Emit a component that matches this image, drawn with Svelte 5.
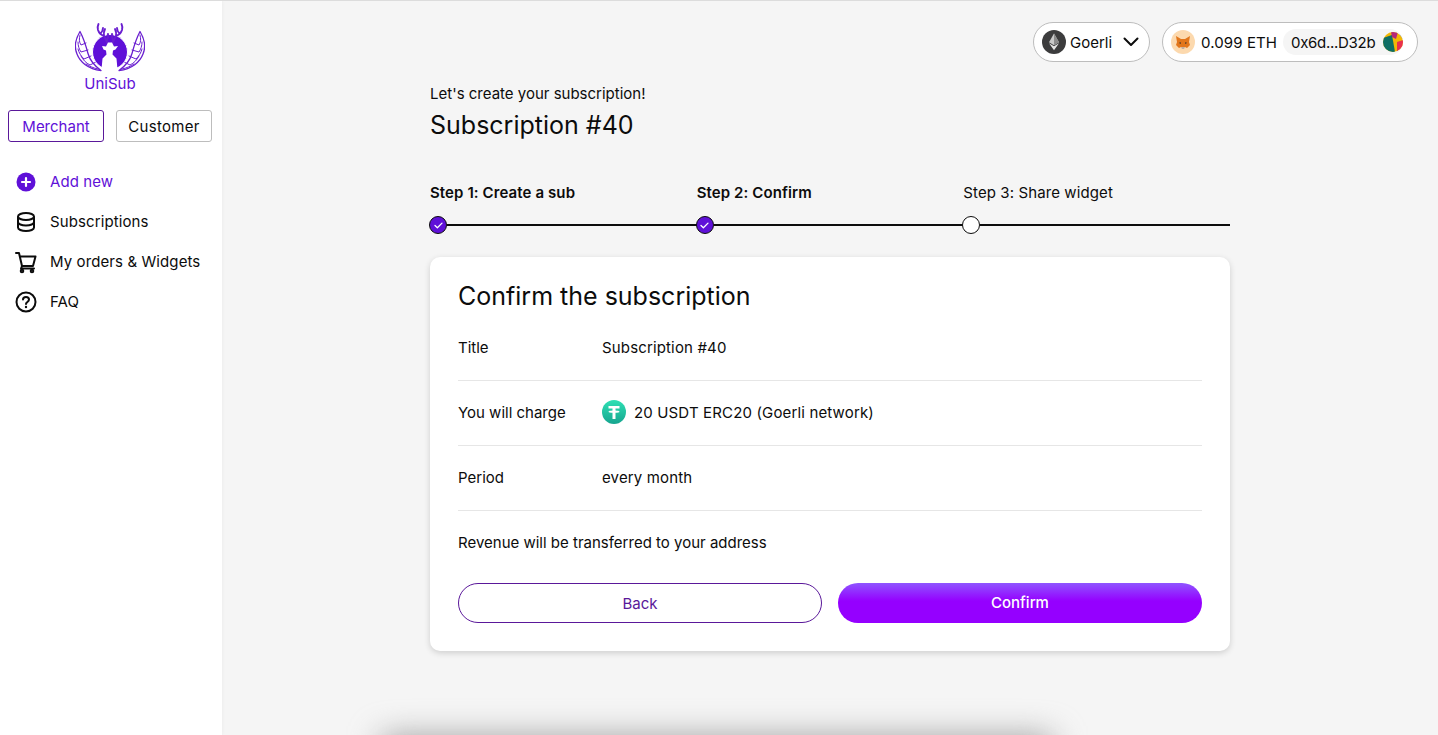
<script>
  const nav = [
    { label: 'Add new', icon: 'add', active: true },
    { label: 'Subscriptions', icon: 'db' },
    { label: 'My orders & Widgets', icon: 'cart' },
    { label: 'FAQ', icon: 'help' }
  ];
  const steps = [
    { label: 'Step 1: Create a sub', done: true },
    { label: 'Step 2: Confirm', done: true },
    { label: 'Step 3: Share widget', done: false }
  ];
  const wings = ['', 'matrix(-1 0 0 1 70 0)'];
</script>

<div class="page">
  <aside class="sidebar">
    <div class="brand">
      <svg class="logo" viewBox="0 0 70 50" width="70" height="50" aria-hidden="true">
        {#each wings as t}
          <g transform={t}>
            <g fill="none" stroke="#6a1fd0" stroke-linecap="round" stroke-linejoin="round">
              <path d="M5 9.500C.5 17-1 25 2 32c3 8 11 15 24 16.500-7-5-11-10-13-17C11 24 9 17 5 9.500z" fill="#fff" stroke-width="1.300" />
              <path d="M5 13c-1 4-1 7 1 10l5-2M3 20c0 4 1 7 3 10l7-2M3 27c1 4 3 7 6 10l7-3M6 34c2 4 5 7 9 9l6-3M11 42c3 2 7 4 12 5" stroke-width="1" />
            </g>
          </g>
        {/each}
        <circle cx="35" cy="30" r="17.500" fill="#5f10d8" stroke="#fff" stroke-width="1" />
        {#each wings as t}
          <g transform={t}>
            <path d="M32.500 21l-3.500-7c-3-1-5-3-6-6-.5-2-.5-4 .5-6M29 14c-.5-3 0-5 1-7M25.500 11.500c1-1 2.500-3 2.500-5.500M32 18c1-2 1.500-3.500 1-6" fill="none" stroke="#6a1fd0" stroke-width="1.900" stroke-linecap="round" stroke-linejoin="round" />
          </g>
        {/each}
        <path d="M27 24l4 .5 2-4h4l2 4 4-.5-2.500 3.500-2.500 1-.5 4 1 1 3 3 1 11c-5 1-11 1-16 0l1-11 3-3 1-1-.5-4-2.500-1z" fill="#fff" />
      </svg>
      <div class="brand-name">UniSub</div>
    </div>

    <div class="roles">
      <button class="role role-on">Merchant</button>
      <button class="role">Customer</button>
    </div>

    <nav class="nav">
      {#each nav as item}
        <div class="nav-item" class:active={item.active}>
          <svg viewBox="0 0 24 24" width="24" height="24" aria-hidden="true">
            {#if item.icon === 'add'}
              <circle cx="12" cy="12" r="9.500" fill="#5f10d8" />
              <path d="M12 8v8M8 12h8" stroke="#fff" stroke-width="2.200" stroke-linecap="round" />
            {:else if item.icon === 'db'}
              <g fill="none" stroke="#0c0c0c" stroke-width="2">
                <ellipse cx="12" cy="6.500" rx="8" ry="3.500" />
                <path d="M4 6.500v11C4 19.500 7.500 21 12 21s8-1.500 8-3.500v-11M4 12c0 2 3.500 3.500 8 3.500s8-1.500 8-3.500" />
              </g>
            {:else if item.icon === 'cart'}
              <g fill="none" stroke="#0c0c0c" stroke-width="2" stroke-linecap="round" stroke-linejoin="round">
                <path d="M2 3h3l3 13h11l2.500-9.500H6" />
                <path d="M8 16l-1 2.500h13" />
                <circle cx="8" cy="21" r="1.300" />
                <circle cx="18" cy="21" r="1.300" />
              </g>
            {:else}
              <g fill="none" stroke="#0c0c0c" stroke-width="2" stroke-linecap="round">
                <circle cx="12" cy="12" r="9.500" />
                <path d="M9 9.500C9 7.800 10.300 7 12 7s3 1 3 2.600c0 2.400-3 2.400-3 4.400" />
              </g>
              <circle cx="12" cy="17" r="1.200" fill="#0c0c0c" />
            {/if}
          </svg>
          <span>{item.label}</span>
        </div>
      {/each}
    </nav>
  </aside>

  <main class="main">
    <header class="topbar">
      <div class="pill chain">
        <svg viewBox="0 0 24 24" width="24" height="24" aria-hidden="true">
          <circle cx="12" cy="12" r="12" fill="#3c3c3d" />
          <path d="M12 3.500l-5 8.700 5 3 5-3z" fill="#c9c9c9" />
          <path d="M12 3.500v11.700l5-3z" fill="#8c8c8c" />
          <path d="M7 13.200l5 7 5-7-5 3z" fill="#e6e6e6" />
        </svg>
        <span>Goerli</span>
        <svg class="chev" viewBox="0 0 16 10" width="16" height="10" aria-hidden="true">
          <path d="M1.500 1.500L8 8l6.500-6.500" fill="none" stroke="#0c0c0c" stroke-width="2" stroke-linecap="round" stroke-linejoin="round" />
        </svg>
      </div>
      <div class="pill wallet">
        <svg viewBox="0 0 24 24" width="24" height="24" aria-hidden="true">
          <circle cx="12" cy="12" r="12" fill="#fcd9ae" />
          <path d="M5 6l5 3h4l5-3-1 6 1 3-3 3-2-1h-4l-2 1-3-3 1-3z" fill="#e2761b" />
          <path d="M10 14l-2-1 1.500-1zM14 14l2-1-1.500-1z" fill="#33302c" />
          <path d="M10 17h4l-1 2h-2z" fill="#c0ad9e" />
        </svg>
        <span class="balance">0.099 ETH</span>
        <div class="address">
          <span>0x6d...D32b</span>
          <svg viewBox="0 0 20 20" width="20" height="20" aria-hidden="true">
            <defs><clipPath id="av"><circle cx="10" cy="10" r="10" /></clipPath></defs>
            <g clip-path="url(#av)">
              <rect width="20" height="20" fill="#f2b705" />
              <path d="M0 6L9 3l3 17H0z" fill="#0e6e64" />
              <path d="M8 0h7l-2 7-4-2z" fill="#b5267a" />
              <path d="M14 10l6-2v12h-6z" fill="#e8304f" />
              <path d="M15 0h5v7z" fill="#2f6fd6" />
            </g>
          </svg>
        </div>
      </div>
    </header>

    <section class="content">
      <p class="eyebrow">Let's create your subscription!</p>
      <h1 class="title">Subscription #40</h1>

      <div class="steps">
        {#each steps as step}
          <div class="step">
            <div class="step-label" class:done={step.done}>{step.label}</div>
            <div class="track">
              <span class="dot" class:dot-done={step.done}>
                {#if step.done}
                  <svg viewBox="0 0 10 8" width="9" height="7" aria-hidden="true">
                    <path d="M1 4l2.700 2.500L9 1.300" fill="none" stroke="#fff" stroke-width="1.500" stroke-linecap="round" stroke-linejoin="round" />
                  </svg>
                {/if}
              </span>
              <span class="line"></span>
            </div>
          </div>
        {/each}
      </div>

      <div class="card">
        <h2 class="card-title">Confirm the subscription</h2>
        <div class="row first">
          <span class="key">Title</span>
          <span class="val">Subscription #40</span>
        </div>
        <div class="row">
          <span class="key">You will charge</span>
          <span class="val token">
            <svg viewBox="0 0 24 24" width="24" height="24" aria-hidden="true">
              <defs>
                <linearGradient id="teth" x1="0" y1="0" x2="0" y2="1">
                  <stop offset="0" stop-color="#2fe0b4" />
                  <stop offset="1" stop-color="#16a58f" />
                </linearGradient>
              </defs>
              <circle cx="12" cy="12" r="12" fill="url(#teth)" />
              <path d="M6.500 6h11v2.600h-4v2c2 .1 4 .5 4 1.100s-2 1-4 1.100V19h-3v-6.200c-2-.1-4-.5-4-1.100s2-1 4-1.100v-2h-4z" fill="#fff" />
            </svg>
            <span>20 USDT ERC20 (Goerli network)</span>
          </span>
        </div>
        <div class="row">
          <span class="key">Period</span>
          <span class="val">every month</span>
        </div>
        <div class="note">Revenue will be transferred to your address</div>
        <div class="actions">
          <button class="btn back">Back</button>
          <button class="btn confirm">Confirm</button>
        </div>
      </div>
    </section>
    <div class="ghost"></div>
  </main>
</div>

<style>
  :global(body) {
    margin: 0;
    background: #f5f5f5;
    overflow: hidden;
  }
  .page {
    display: flex;
    height: 735px;
    overflow: hidden;
    font-family: Inter, "Liberation Sans", sans-serif;
    color: #0c0c0c;
    font-size: 15px;
    border-top: 1px solid #dcdcdc;
    box-sizing: border-box;
  }
  .sidebar {
    width: 222px;
    flex: none;
    background: #fff;
    box-sizing: border-box;
    padding: 21px 10px 0 8px;
    box-shadow: 1px 0 3px rgba(0, 0, 0, 0.03);
  }
  .brand {
    display: flex;
    flex-direction: column;
    align-items: center;
  }
  .logo {
    display: block;
  }
  .brand-name {
    margin-top: 3px;
    color: #5f10d8;
    font-size: 15px;
    line-height: 18px;
  }
  .roles {
    display: flex;
    justify-content: space-between;
    margin-top: 17px;
  }
  .role {
    width: 96px;
    height: 32px;
    padding: 0;
    box-sizing: border-box;
    background: #fff;
    border: 1px solid #bdbdbd;
    border-radius: 3px;
    font: inherit;
    font-size: 15px;
    letter-spacing: 0.3px;
    color: #0c0c0c;
  }
  .role-on {
    border-color: #5a189a;
    color: #5f10d8;
    letter-spacing: 0;
  }
  .nav {
    margin-top: 20px;
    padding-left: 6px;
  }
  .nav-item {
    display: flex;
    align-items: center;
    gap: 12px;
    height: 40px;
    font-size: 15px;
    letter-spacing: 0.1px;
    white-space: nowrap;
  }
  .nav-item span {
    padding-bottom: 2px;
  }
  .active {
    color: #5f10d8;
  }
  .main {
    flex: 1;
    position: relative;
    min-width: 0;
  }
  .topbar {
    display: flex;
    justify-content: flex-end;
    gap: 12px;
    padding: 21px 20px 0 0;
  }
  .pill {
    display: flex;
    align-items: center;
    height: 40px;
    box-sizing: border-box;
    background: #fff;
    border: 1px solid #bdbdbd;
    border-radius: 20px;
  }
  .chain {
    width: 117px;
    padding-left: 8px;
    gap: 4px;
    font-size: 15px;
  }
  .chev {
    margin-left: 7px;
  }
  .wallet {
    width: 256px;
    padding-left: 8px;
    font-size: 15px;
  }
  .balance {
    margin-left: 6px;
    letter-spacing: 0.1px;
  }
  .address {
    display: flex;
    align-items: center;
    gap: 8px;
    margin-left: 6px;
    height: 26px;
    padding-left: 8px;
    border-radius: 13px;
    background: #f5f5f5;
    letter-spacing: -0.3px;
    white-space: nowrap;
  }
  .content {
    width: 800px;
    margin: 22px auto 0;
  }
  .eyebrow {
    margin: 0;
    font-size: 15px;
    line-height: 20px;
  }
  .title {
    margin: 5px 0 0;
    font-size: 25px;
    font-weight: 400;
    line-height: 32px;
  }
  .steps {
    display: grid;
    grid-template-columns: repeat(3, 1fr);
    margin-top: 42px;
  }
  .step-label {
    font-size: 15px;
    line-height: 20px;
    letter-spacing: 0.1px;
  }
  .done {
    font-weight: 600;
  }
  .track {
    display: flex;
    align-items: center;
    margin: 13px 0 0 -1px;
  }
  .dot {
    flex: none;
    width: 18px;
    height: 18px;
    box-sizing: border-box;
    border: 1px solid #0c0c0c;
    border-radius: 50%;
    background: #fff;
    display: flex;
    align-items: center;
    justify-content: center;
  }
  .dot-done {
    background: #5f10d8;
  }
  .line {
    flex: 1;
    height: 2px;
    background: #0c0c0c;
  }
  .card {
    margin-top: 23px;
    background: #fff;
    border-radius: 10px;
    padding: 22px 28px 28px;
    box-shadow: 0 2px 6px rgba(0, 0, 0, 0.16);
  }
  .card-title {
    margin: 0;
    font-size: 25px;
    font-weight: 400;
    line-height: 34px;
  }
  .row {
    display: flex;
    align-items: center;
    height: 65px;
    box-sizing: border-box;
    border-bottom: 1px solid #e6e6e6;
    padding-bottom: 2px;
  }
  .first {
    height: 68px;
    padding-top: 3px;
  }
  .key {
    width: 144px;
    flex: none;
  }
  .val {
    letter-spacing: 0.15px;
  }
  .token {
    display: flex;
    align-items: center;
    gap: 8px;
  }
  .token svg {
    display: block;
  }
  .note {
    height: 64px;
    line-height: 64px;
  }
  .actions {
    display: grid;
    grid-template-columns: 1fr 1fr;
    gap: 16px;
    margin-top: 8px;
  }
  .btn {
    height: 40px;
    border-radius: 20px;
    font: inherit;
    font-size: 15px;
    padding: 0;
    box-sizing: border-box;
  }
  .back {
    background: #fff;
    border: 1px solid #5a189a;
    color: #5a189a;
    padding-top: 1px;
  }
  .confirm {
    border: 0;
    color: #fff;
    font-weight: 500;
    padding-bottom: 1px;
    background: linear-gradient(180deg, #8f55ff 0%, #9500ff 45%, #9500ff 100%);
  }
  .ghost {
    position: absolute;
    left: 160px;
    width: 670px;
    top: 736px;
    height: 30px;
    background: #999;
    filter: blur(16px);
  }
</style>
